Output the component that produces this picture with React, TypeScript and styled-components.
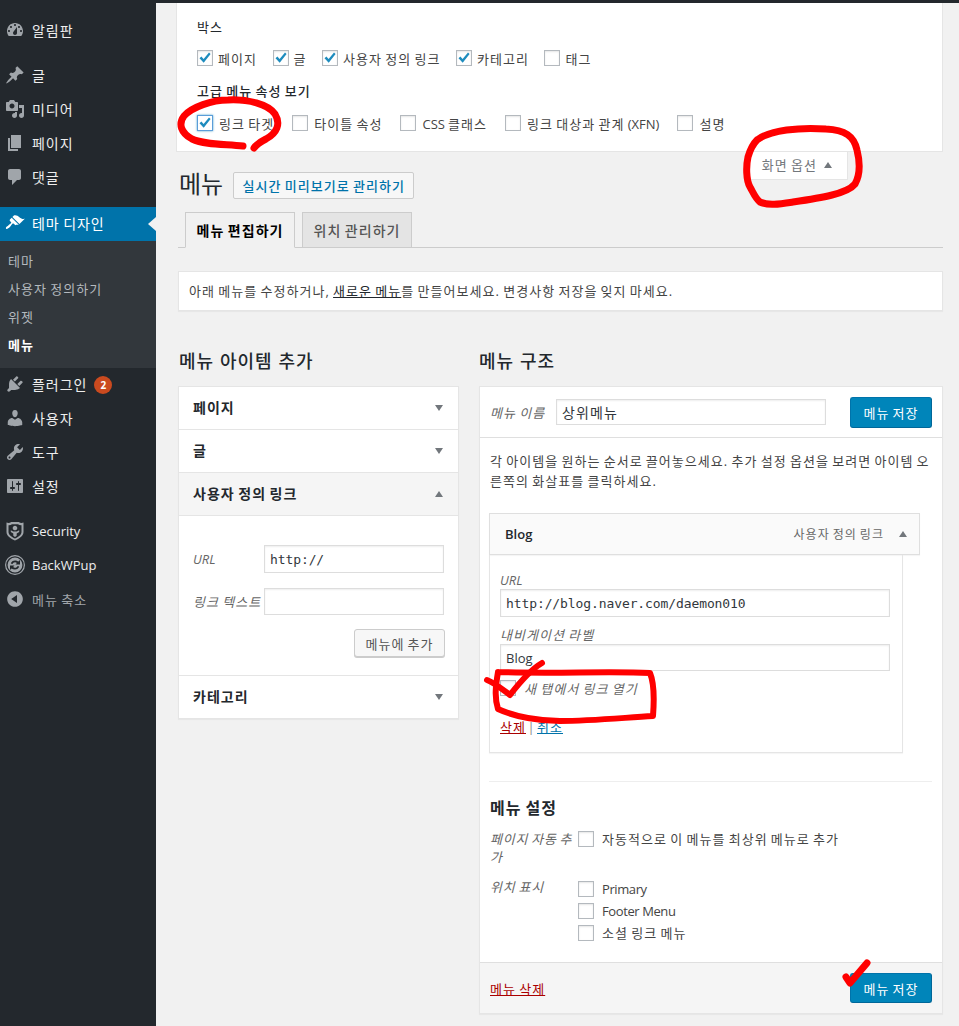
import React from "react";
import styled, { createGlobalStyle } from "styled-components";

const GlobalStyle = createGlobalStyle`
  html, body {
    margin: 0;
    padding: 0;
    background: #f1f1f1;
  }
  body {
    font-family: "Open Sans", "Noto Sans CJK KR", sans-serif;
    font-size: 13px;
    color: #444;
    letter-spacing: 0.08em;
    word-spacing: -1.2px;
  }
  * { box-sizing: border-box; }
`;

const Page = styled.div`
  position: relative;
  display: flex;
  width: 959px;
  height: 1026px;
  overflow: hidden;
`;

const Sidebar = styled.nav`
  width: 156px;
  flex: none;
  background: #23282d;
  padding-top: 14px;
`;

const MenuItem = styled.div<{ $active?: boolean; $muted?: boolean; $gap?: number }>`
  position: relative;
  display: flex;
  align-items: center;
  gap: 7px;
  height: 34px;
  padding: 0 0 2px 5px;
  margin-top: ${(p) => p.$gap ?? 0}px;
  background: ${(p) => (p.$active ? "#0073aa" : "transparent")};
  color: ${(p) => (p.$active ? "#fff" : p.$muted ? "#a0a5aa" : "#eee")};
  fill: ${(p) => (p.$active ? "#fff" : "#a0a5aa")};
  font-size: ${(p) => (p.$muted ? "13px" : "14px")};
  letter-spacing: ${(p) => (p.$muted ? "0.08em" : "0.07em")};
  ${(p) =>
    p.$active &&
    `&::after {
      content: "";
      position: absolute;
      right: 0;
      top: 10px;
      border: 7px solid transparent;
      border-right-color: #f1f1f1;
      border-left-width: 0;
      border-right-width: 8px;
    }`}
`;

const MenuIcon = styled.svg`
  width: 20px;
  height: 20px;
  flex: none;
`;

const SubMenu = styled.div`
  background: #32373c;
  padding: 6px 0 9px;
`;

const SubItem = styled.div<{ $current?: boolean }>`
  height: 28px;
  line-height: 28px;
  padding-left: 8px;
  color: ${(p) => (p.$current ? "#fff" : "#b4b9be")};
  font-weight: ${(p) => (p.$current ? 700 : 400)};
`;

const Badge = styled.span`
  display: inline-flex;
  align-items: center;
  justify-content: center;
  width: 18px;
  height: 18px;
  margin: 2px 0 0 0;
  border-radius: 50%;
  background: #ca4a1f;
  color: #fff;
  font-size: 10px;
  font-weight: 700;
  letter-spacing: 0;
`;

const Main = styled.main`
  flex: 1;
  min-width: 0;
  border-top: 3px solid #23282d;
  padding: 0 16px 0 20px;
`;

const ScreenPanel = styled.section`
  height: 149px;
  background: #fff;
  border: 1px solid #e5e5e5;
  border-top: 0;
  padding: 13px 20px 0;
`;

const PanelTitle = styled.div<{ $top?: number; $strong?: boolean }>`
  line-height: 22px;
  color: #23282d;
  margin-top: ${(p) => p.$top ?? 0}px;
  font-weight: ${(p) => (p.$strong ? 500 : 400)};
`;

const CheckRow = styled.div<{ $top: number; $gap: number }>`
  display: flex;
  align-items: center;
  gap: ${(p) => p.$gap}px;
  margin-top: ${(p) => p.$top}px;
  height: 20px;
`;

const CheckLabel = styled.label<{ $gap?: number }>`
  display: inline-flex;
  align-items: center;
  gap: ${(p) => p.$gap ?? 5}px;
  color: #444;
  white-space: nowrap;
`;

const Box = styled.span<{ $focus?: boolean }>`
  display: inline-flex;
  align-items: center;
  justify-content: center;
  width: 16px;
  height: 16px;
  flex: none;
  background: #fff;
  border: 1px solid ${(p) => (p.$focus ? "#5b9dd9" : "#b4b9be")};
  box-shadow: ${(p) =>
    p.$focus ? "0 0 2px rgba(30,140,190,.8)" : "inset 0 1px 2px rgba(0,0,0,.1)"};
`;

const Latin = styled.span<{ $tight?: boolean }>`
  letter-spacing: ${(p) => (p.$tight ? "-0.4px" : "0")};
  word-spacing: 0;
  font-size: 13px;
`;

const ScreenTabRow = styled.div`
  display: flex;
  justify-content: flex-end;
  height: 28px;
  margin-bottom: -8px;
  padding-right: 95px;
`;

const ScreenTab = styled.div`
  display: flex;
  align-items: center;
  gap: 7px;
  height: 28px;
  padding: 0 15px 2px 14px;
  background: #fff;
  border: 1px solid #e5e5e5;
  border-top: 0;
  color: #72777c;
`;

const Arrow = styled.span<{ $up?: boolean; $top?: number }>`
  display: inline-block;
  flex: none;
  margin-top: ${(p) => p.$top ?? 0}px;
  border-left: 4.5px solid transparent;
  border-right: 4.5px solid transparent;
  ${(p) =>
    p.$up ? "border-bottom: 6px solid #72777c;" : "border-top: 6px solid #72777c;"}
`;

const TitleRow = styled.div`
  position: relative;
  display: flex;
  align-items: center;
  gap: 10px;
  height: 27px;
  padding-left: 3px;
`;

const PageTitle = styled.h1`
  margin: 0 0 4px;
  font-size: 24px;
  line-height: 30px;
  font-weight: 400;
  letter-spacing: 0;
  color: #23282d;
`;

const OutlineLink = styled.a`
  display: flex;
  align-items: center;
  justify-content: center;
  width: 181px;
  height: 27px;
  background: #f7f7f7;
  border: 1px solid #ccc;
  border-radius: 2px;
  color: #0073aa;
  font-weight: 500;
`;

const TabBar = styled.div`
  display: flex;
  gap: 7px;
  height: 36px;
  margin: 13px 0 0 2px;
  padding-left: 7px;
  border-bottom: 1px solid #ccc;
`;

const Tab = styled.div<{ $active?: boolean }>`
  display: flex;
  align-items: center;
  justify-content: center;
  width: 110px;
  height: 36px;
  border: 1px solid #ccc;
  border-bottom-color: ${(p) => (p.$active ? "#f1f1f1" : "#ccc")};
  background: ${(p) => (p.$active ? "#f1f1f1" : "#e4e4e4")};
  color: ${(p) => (p.$active ? "#000" : "#555")};
  font-size: 14px;
  font-weight: ${(p) => (p.$active ? 700 : 500)};
`;

const Notice = styled.div`
  display: flex;
  align-items: center;
  height: 40px;
  margin: 23px 0 0 2px;
  padding: 0 0 2px 10px;
  background: #fff;
  border: 1px solid #e5e5e5;
  box-shadow: 0 1px 1px rgba(0, 0, 0, 0.04);
  color: #444;
  white-space: nowrap;
`;

const NoticeLink = styled.a`
  color: #23282d;
  text-decoration: underline;
`;

const Columns = styled.div`
  display: flex;
  gap: 20px;
  margin: 38px 0 0 2px;
`;

const LeftColumn = styled.div`
  width: 281px;
  flex: none;
`;

const RightColumn = styled.div`
  width: 464px;
  flex: none;
`;

const ColumnTitle = styled.h2<{ $inset?: number }>`
  margin: 0 0 12px ${(p) => p.$inset ?? 0}px;
  height: 25px;
  line-height: 25px;
  font-size: 18px;
  font-weight: 500;
  word-spacing: 0;
  color: #23282d;
`;

const Accordion = styled.div`
  background: #fff;
  border: 1px solid #e5e5e5;
  box-shadow: 0 1px 1px rgba(0, 0, 0, 0.04);
`;

const AccordionRow = styled.div<{ $open?: boolean; $last?: boolean }>`
  display: flex;
  align-items: center;
  justify-content: space-between;
  height: ${(p) => (p.$last ? 42 : 43)}px;
  padding: 0 15px 3px 14px;
  background: ${(p) => (p.$open ? "#f5f5f5" : "#fff")};
  border-bottom: ${(p) => (p.$last ? "0" : "1px solid #e5e5e5")};
  font-size: 14px;
  font-weight: 700;
  color: #23282d;
`;

const AccordionBody = styled.div`
  height: 160px;
  padding: 29px 14px 0;
  border-bottom: 1px solid #e5e5e5;
`;

const FieldRow = styled.div<{ $top?: number }>`
  display: flex;
  align-items: center;
  margin-top: ${(p) => p.$top ?? 0}px;
`;

const FieldLabel = styled.span<{ $width: number }>`
  width: ${(p) => p.$width}px;
  flex: none;
  font-style: italic;
  color: #666;
  white-space: nowrap;
`;

const TextField = styled.div<{ $width: number; $height?: number; $mono?: boolean; $large?: boolean }>`
  display: flex;
  align-items: center;
  width: ${(p) => p.$width}px;
  height: ${(p) => p.$height ?? 28}px;
  padding-left: 5px;
  background: #fff;
  border: 1px solid #ddd;
  box-shadow: inset 0 1px 2px rgba(0, 0, 0, 0.07);
  color: #32373c;
  font-family: ${(p) =>
    p.$mono ? '"DejaVu Sans Mono", "Liberation Mono", monospace' : "inherit"};
  font-size: ${(p) => (p.$large ? "14px" : "13px")};
  letter-spacing: ${(p) => (p.$mono ? "-0.1px" : "0.08em")};
  white-space: nowrap;
`;

const AddRow = styled.div`
  display: flex;
  justify-content: flex-end;
  margin: 14px -1px 0 0;
`;

const GreyButton = styled.button`
  width: 91px;
  height: 28px;
  padding: 0;
  background: #f7f7f7;
  border: 1px solid #ccc;
  border-radius: 3px;
  box-shadow: 0 1px 0 #ccc;
  color: #555;
  font: inherit;
  letter-spacing: inherit;
  word-spacing: inherit;
`;

const PrimaryButton = styled.button<{ $height: number }>`
  width: 82px;
  height: ${(p) => p.$height}px;
  padding: 0;
  background: #0085ba;
  border: 1px solid #006799;
  border-top-color: #0073aa;
  border-left-color: #0073aa;
  border-radius: 3px;
  color: #fff;
  font: inherit;
  letter-spacing: inherit;
  word-spacing: inherit;
`;

const MenuCard = styled.div`
  height: 628px;
  display: flex;
  flex-direction: column;
  background: #fff;
  border: 1px solid #e5e5e5;
  box-shadow: 0 1px 1px rgba(0, 0, 0, 0.04);
`;

const CardHeader = styled.div`
  display: flex;
  align-items: center;
  justify-content: space-between;
  height: 51px;
  padding: 0 10px;
  border-bottom: 1px solid #dfdfdf;
`;

const NameGroup = styled.div`
  display: flex;
  align-items: center;
`;

const CardBody = styled.div`
  flex: 1;
  padding: 13px 10px 0;
`;

const Intro = styled.p`
  margin: 0 0 22px;
  line-height: 20px;
  color: #444;
  white-space: nowrap;
`;

const ItemHandle = styled.div`
  display: flex;
  align-items: center;
  justify-content: space-between;
  width: 431px;
  height: 42px;
  margin-left: -1px;
  padding: 0 12px 0 15px;
  background: #fafafa;
  border: 1px solid #dfdfdf;
  box-shadow: 0 1px 1px rgba(0, 0, 0, 0.04);
`;

const ItemName = styled.span`
  font-weight: 600;
  color: #23282d;
  letter-spacing: 0;
`;

const ItemType = styled.span`
  display: flex;
  align-items: center;
  gap: 15px;
  font-size: 12px;
  color: #666;
`;

const ItemSettings = styled.div`
  width: 414px;
  height: 198px;
  margin-left: -1px;
  padding: 16px 10px 0;
  border: 1px solid #e5e5e5;
  border-top: 0;
  box-shadow: 0 1px 1px rgba(0, 0, 0, 0.04);
`;

const StackLabel = styled.div<{ $top?: number }>`
  line-height: 18px;
  margin-top: ${(p) => p.$top ?? 0}px;
  font-style: italic;
  color: #666;
`;

const NewTabRow = styled.div`
  display: flex;
  align-items: center;
  gap: 8px;
  margin-top: 8px;
  height: 18px;
  font-style: italic;
  color: #666;
`;

const ItemLinks = styled.div`
  margin-top: 20px;
  color: #888;
  word-spacing: -3px;
`;

const DangerLink = styled.a`
  color: #a00;
  text-decoration: underline;
`;

const BlueLink = styled.a`
  color: #0073aa;
  text-decoration: underline;
`;

const Divider = styled.hr`
  width: 443px;
  margin: 28px 0 0 -1px;
  border: 0;
  border-top: 1px solid #eee;
`;

const SettingsTitle = styled.h3`
  margin: 14px 0 0;
  height: 24px;
  line-height: 24px;
  font-size: 16px;
  font-weight: 700;
  color: #23282d;
`;

const SettingsGrid = styled.div`
  display: grid;
  grid-template-columns: 88px 1fr;
  row-gap: 12px;
  margin-top: 10px;
  line-height: 18px;
`;

const SettingsLabel = styled.div`
  font-style: italic;
  color: #666;
  letter-spacing: 0.06em;
  line-height: 18px;
`;

const SettingsOptions = styled.div<{ $top: number }>`
  display: flex;
  flex-direction: column;
  gap: 4px;
  margin-top: ${(p) => p.$top}px;
`;

const CardFooter = styled.div`
  display: flex;
  align-items: center;
  justify-content: space-between;
  height: 51px;
  padding: 0 10px;
  background: #f5f5f5;
  border-top: 1px solid #dfdfdf;
`;

const Annotations = styled.svg`
  position: absolute;
  left: 0;
  top: 0;
  width: 959px;
  height: 1026px;
  pointer-events: none;
  fill: none;
  stroke: #f00;
  stroke-linecap: round;
  stroke-linejoin: round;
`;

const Check = () => (
  <svg width="14" height="14" viewBox="0 0 14 14" aria-hidden="true">
    <path d="M1.5 7.2 L3.4 5.6 L5.6 8 L11 1.6 L12.6 3 L5.7 11.8 Z" fill="#1e8cbe" />
  </svg>
);

type OptionProps = { label: React.ReactNode; checked?: boolean; focus?: boolean; gap?: number };

const Option = ({ label, checked, focus, gap }: OptionProps) => (
  <CheckLabel $gap={gap}>
    <Box $focus={focus}>{checked && <Check />}</Box>
    {label}
  </CheckLabel>
);

const icons: Record<string, string> = {
  dashboard:
    "M3.76 16h12.48c1.1-1.37 1.76-3.11 1.76-5 0-4.42-3.58-8-8-8s-8 3.58-8 8c0 1.89.66 3.63 1.76 5zM10 4c.55 0 1 .45 1 1s-.45 1-1 1-1-.45-1-1 .45-1 1-1zM6 6c.55 0 1 .45 1 1s-.45 1-1 1-1-.45-1-1 .45-1 1-1zm8 0c.55 0 1 .45 1 1s-.45 1-1 1-1-.45-1-1 .45-1 1-1zm-5.37 5.55L12 7v6c0 1.1-.9 2-2 2s-2-.9-2-2c0-.57.24-1.08.63-1.45zM4 10c.55 0 1 .45 1 1s-.45 1-1 1-1-.45-1-1 .45-1 1-1zm12 0c.55 0 1 .45 1 1s-.45 1-1 1-1-.45-1-1 .45-1 1-1z",
  pin: "M10.44 3.02l1.82-1.82 6.36 6.35-1.83 1.82c-1.05-.68-2.48-.57-3.41.36l-.75.75c-.92.93-1.04 2.35-.35 3.41l-1.83 1.82-2.41-2.41-2.8 2.79c-.42.42-3.38 2.71-3.8 2.29s1.86-3.39 2.28-3.81l2.79-2.79L4.1 9.36l1.83-1.82c1.05.69 2.48.57 3.4-.36l.75-.75c.93-.92 1.05-2.35.36-3.41z",
  media:
    "M13 11V4c0-.55-.45-1-1-1h-1.67L9 1H5L3.67 3H2c-.55 0-1 .45-1 1v7c0 .55.45 1 1 1h10c.55 0 1-.45 1-1zM7 4.5c1.38 0 2.5 1.12 2.5 2.5S8.38 9.5 7 9.5 4.5 8.38 4.5 7 5.62 4.5 7 4.5zM14 6h5v10.5c0 1.38-1.12 2.5-2.5 2.5S14 17.88 14 16.5s1.12-2.5 2.5-2.5c.17 0 .34.02.5.05V9h-3V6zm-4 8.05V13h2v3.5c0 1.38-1.12 2.5-2.5 2.5S7 17.88 7 16.5 8.12 14 9.5 14c.17 0 .34.02.5.05z",
  page: "M6 15V2h10v13H6zm-1 1h8v2H3V5h2v11z",
  comments:
    "M5 2h9c1.1 0 2 .9 2 2v7c0 1.1-.9 2-2 2h-2l-5 5v-5H5c-1.1 0-2-.9-2-2V4c0-1.1.9-2 2-2z",
  appearance:
    "M14.48 11.06L7.41 3.99l1.5-1.5c.5-.56 2.3-.47 3.51.32 1.21.8 1.43 1.28 2.91 2.1 1.18.64 2.45 1.26 4.45.85zm-.71.71L6.7 4.7 4.93 6.47c-.39.39-.39 1.02 0 1.41l1.06 1.06c.39.39.39 1.03 0 1.42-.6.6-1.43 1.11-2.21 1.69-.35.26-.7.53-1.01.84C1.43 13.23.4 14.98 1.1 15.68c.7.7 2.45-.33 3.77-1.67.31-.31.58-.66.84-1.01.58-.78 1.09-1.61 1.69-2.21.39-.39 1.02-.39 1.41 0l1.06 1.06c.39.39 1.03.39 1.42 0z",
  plugins:
    "M13.11 4.36L9.87 7.6 8 5.73l3.24-3.24c.35-.34 1.05-.2 1.56.32.52.51.66 1.21.31 1.55zm-8 1.77l.91-1.12 9.01 9.01-1.19.84c-.71.71-2.63 1.16-3.82 1.16H6.14L4.9 17.26c-.59.59-1.54.59-2.12 0-.59-.58-.59-1.53 0-2.12l1.24-1.24v-3.88c0-1.13.4-3.19 1.09-3.89zm7.26 3.97l3.24-3.24c.34-.35 1.04-.21 1.55.31.52.51.66 1.21.31 1.55l-3.24 3.25z",
  users:
    "M10 9.25c-2.27 0-2.73-3.44-2.73-3.44C7 4.02 7.82 2 9.97 2c2.16 0 2.98 2.02 2.71 3.81 0 0-.41 3.44-2.68 3.44zm0 2.57L12.72 10c2.39 0 4.52 2.33 4.52 4.53v2.49s-3.65 1.13-7.24 1.13c-3.65 0-7.24-1.13-7.24-1.13v-2.49c0-2.25 1.94-4.48 4.47-4.48z",
  tools:
    "M16.68 9.77c-1.34 1.34-3.3 1.67-4.95.99l-5.41 6.52c-.99.99-2.59.99-3.58 0s-.99-2.59 0-3.57l6.52-5.42c-.68-1.65-.35-3.61.99-4.95 1.28-1.28 3.12-1.62 4.72-1.06l-2.89 2.89 2.82 2.82 2.86-2.87c.53 1.58.18 3.39-1.08 4.67zM3.81 16.21c.4.39 1.04.39 1.43 0 .4-.4.4-1.04 0-1.43-.39-.4-1.03-.4-1.43 0-.39.39-.39 1.03 0 1.43z",
  settings:
    "M18 16V4c0-.55-.45-1-1-1H3c-.55 0-1 .45-1 1v12c0 .55.45 1 1 1h14c.55 0 1-.45 1-1zM8 11h1c.55 0 1 .45 1 1s-.45 1-1 1H8v1.5c0 .28-.22.5-.5.5s-.5-.22-.5-.5V13H6c-.55 0-1-.45-1-1s.45-1 1-1h1V5.5c0-.28.22-.5.5-.5s.5.22.5.5V11zm5-2h-1c-.55 0-1-.45-1-1s.45-1 1-1h1V5.5c0-.28.22-.5.5-.5s.5.22.5.5V7h1c.55 0 1 .45 1 1s-.45 1-1 1h-1v5.5c0 .28-.22.5-.5.5s-.5-.22-.5-.5V9z",
  collapse:
    "M10 2.16c4.33 0 7.84 3.51 7.84 7.84s-3.51 7.84-7.84 7.84S2.16 14.33 2.16 10 5.71 2.16 10 2.16zm2 11.72V6.12L6.18 9.97z",
  shield:
    "M1.500 1.500c1.600.7 3.300.6 4.700-.5h7.600c1.400 1.100 3.100 1.200 4.700.5V11c0 3.800-4.200 6.900-8.500 8.500C5.700 17.900 1.500 14.800 1.500 11zM3.500 4.200V11c0 2.700 3.200 5.200 6.500 6.400 3.300-1.200 6.500-3.700 6.500-6.400V4.200c-1.300.1-2.500-.2-3.500-1H7c-1 .8-2.200 1.100-3.500 1zM10 4.800c1.300 0 2.300 1 2.300 2.300S11.300 9.400 10 9.400 7.700 8.400 7.700 7.100 8.700 4.800 10 4.800zM5.800 9.300l2.400 1.300h3.600l2.400-1.300v1.800l-2.500 1.400v2.200L10 16l-1.700-1.300v-2.200l-2.500-1.400z",
  backup:
    "M10 0a10 10 0 1 1 0 20 10 10 0 0 1 0-20zM10 1.200a8.800 8.800 0 1 0 0 17.600 8.800 8.800 0 0 0 0-17.600zM10 2.600a7.400 7.400 0 1 1 0 14.800 7.400 7.400 0 0 1 0-14.800zM10 5.500c-2 0-3.600 1.300-4.200 3.100l1.600.5c.4-1.100 1.400-1.900 2.600-1.900.7 0 1.400.3 1.900.8L10.500 9.500H15V5l-1.600 1.600C12.500 6 11.300 5.500 10 5.500zM5 10.500V15l1.600-1.600c.9.700 2.100 1.100 3.400 1.100 2 0 3.600-1.300 4.200-3.100l-1.600-.5c-.4 1.100-1.400 1.900-2.600 1.900-.7 0-1.400-.3-1.900-.8l1.400-1.500z",
};

const Icon = ({ name }: { name: string }) => (
  <MenuIcon viewBox="0 0 20 20" aria-hidden="true">
    <path fillRule="evenodd" d={icons[name]} />
  </MenuIcon>
);

export default function App() {
  return (
    <Page>
      <GlobalStyle />
      <Sidebar>
        <MenuItem>
          <Icon name="dashboard" />
          알림판
        </MenuItem>
        <MenuItem $gap={11}>
          <Icon name="pin" />글
        </MenuItem>
        <MenuItem>
          <Icon name="media" />
          미디어
        </MenuItem>
        <MenuItem>
          <Icon name="page" />
          페이지
        </MenuItem>
        <MenuItem>
          <Icon name="comments" />
          댓글
        </MenuItem>
        <MenuItem $active $gap={12}>
          <Icon name="appearance" />
          테마 디자인
        </MenuItem>
        <SubMenu>
          <SubItem>테마</SubItem>
          <SubItem>사용자 정의하기</SubItem>
          <SubItem>위젯</SubItem>
          <SubItem $current>메뉴</SubItem>
        </SubMenu>
        <MenuItem>
          <Icon name="plugins" />
          플러그인
          <Badge>2</Badge>
        </MenuItem>
        <MenuItem>
          <Icon name="users" />
          사용자
        </MenuItem>
        <MenuItem>
          <Icon name="tools" />
          도구
        </MenuItem>
        <MenuItem>
          <Icon name="settings" />
          설정
        </MenuItem>
        <MenuItem $gap={11}>
          <Icon name="shield" />
          <Latin>Security</Latin>
        </MenuItem>
        <MenuItem>
          <Icon name="backup" />
          <Latin>BackWPup</Latin>
        </MenuItem>
        <MenuItem $muted>
          <Icon name="collapse" />
          메뉴 축소
        </MenuItem>
      </Sidebar>

      <Main>
        <ScreenPanel>
          <PanelTitle>박스</PanelTitle>
          <CheckRow $top={10} $gap={15.5}>
            <Option checked label="페이지" />
            <Option checked label="글" />
            <Option checked label="사용자 정의 링크" />
            <Option checked label="카테고리" />
            <Option label="태그" />
          </CheckRow>
          <PanelTitle $top={12} $strong>
            고급 메뉴 속성 보기
          </PanelTitle>
          <CheckRow $top={11} $gap={18}>
            <Option gap={6} checked focus label="링크 타겟" />
            <Option gap={6} label="타이틀 속성" />
            <Option gap={6} label={<span><Latin>CSS</Latin> 클래스</span>} />
            <Option gap={6} label={<span>링크 대상과 관계 <Latin>(XFN)</Latin></span>} />
            <Option gap={6} label="설명" />
          </CheckRow>
        </ScreenPanel>

        <ScreenTabRow>
          <ScreenTab>
            화면 옵션
            <Arrow $up />
          </ScreenTab>
        </ScreenTabRow>

        <TitleRow>
          <PageTitle>메뉴</PageTitle>
          <OutlineLink>실시간 미리보기로 관리하기</OutlineLink>
        </TitleRow>

        <TabBar>
          <Tab $active>메뉴 편집하기</Tab>
          <Tab>위치 관리하기</Tab>
        </TabBar>

        <Notice>
          <span>
            아래 메뉴를 수정하거나, <NoticeLink>새로운 메뉴</NoticeLink>를 만들어보세요. 변경사항 저장을 잊지 마세요.
          </span>
        </Notice>

        <Columns>
          <LeftColumn>
            <ColumnTitle $inset={1}>메뉴 아이템 추가</ColumnTitle>
            <Accordion>
              <AccordionRow>
                페이지
                <Arrow $top={3} />
              </AccordionRow>
              <AccordionRow>
                글
                <Arrow $top={3} />
              </AccordionRow>
              <AccordionRow $open>
                사용자 정의 링크
                <Arrow $up $top={3} />
              </AccordionRow>
              <AccordionBody>
                <FieldRow>
                  <FieldLabel $width={71}>
                    <Latin>URL</Latin>
                  </FieldLabel>
                  <TextField $width={180} $mono>
                    http://
                  </TextField>
                </FieldRow>
                <FieldRow $top={15}>
                  <FieldLabel $width={71}>링크 텍스트</FieldLabel>
                  <TextField $width={180} $height={27} />
                </FieldRow>
                <AddRow>
                  <GreyButton>메뉴에 추가</GreyButton>
                </AddRow>
              </AccordionBody>
              <AccordionRow $last>
                카테고리
                <Arrow $top={3} />
              </AccordionRow>
            </Accordion>
          </LeftColumn>

          <RightColumn>
            <ColumnTitle>메뉴 구조</ColumnTitle>
            <MenuCard>
              <CardHeader>
                <NameGroup>
                  <FieldLabel $width={66}>메뉴 이름</FieldLabel>
                  <TextField $width={270} $height={26} $large>
                    상위메뉴
                  </TextField>
                </NameGroup>
                <PrimaryButton $height={31}>메뉴 저장</PrimaryButton>
              </CardHeader>

              <CardBody>
                <Intro>
                  각 아이템을 원하는 순서로 끌어놓으세요. 추가 설정 옵션을 보려면 아이템 오
                  <br />
                  른쪽의 화살표를 클릭하세요.
                </Intro>

                <ItemHandle>
                  <ItemName>Blog</ItemName>
                  <ItemType>
                    사용자 정의 링크
                    <Arrow $up />
                  </ItemType>
                </ItemHandle>
                <ItemSettings>
                  <StackLabel>
                    <Latin>URL</Latin>
                  </StackLabel>
                  <TextField $width={390} $mono>
                    http://blog.naver.com/daemon010
                  </TextField>
                  <StackLabel $top={9}>내비게이션 라벨</StackLabel>
                  <TextField $width={390} $height={27}>
                    <Latin>Blog</Latin>
                  </TextField>
                  <NewTabRow>
                    <Box />새 탭에서 링크 열기
                  </NewTabRow>
                  <ItemLinks>
                    <DangerLink>삭제</DangerLink> | <BlueLink>취소</BlueLink>
                  </ItemLinks>
                </ItemSettings>

                <Divider />
                <SettingsTitle>메뉴 설정</SettingsTitle>
                <SettingsGrid>
                  <SettingsLabel>페이지 자동 추가</SettingsLabel>
                  <SettingsOptions $top={0}>
                    <Option gap={8} label="자동적으로 이 메뉴를 최상위 메뉴로 추가" />
                  </SettingsOptions>
                  <SettingsLabel>위치 표시</SettingsLabel>
                  <SettingsOptions $top={2}>
                    <Option gap={8} label={<Latin $tight>Primary</Latin>} />
                    <Option gap={8} label={<Latin $tight>Footer Menu</Latin>} />
                    <Option gap={8} label="소셜 링크 메뉴" />
                  </SettingsOptions>
                </SettingsGrid>
              </CardBody>

              <CardFooter>
                <DangerLink>메뉴 삭제</DangerLink>
                <PrimaryButton $height={30}>메뉴 저장</PrimaryButton>
              </CardFooter>
            </MenuCard>
          </RightColumn>
        </Columns>
      </Main>

      <Annotations viewBox="0 0 959 1026" aria-hidden="true">
        <path
          strokeWidth="7"
          d="M243 146 C225 144 205 145 192 139 C181 133 178 124 184 116 C192 107 212 100 228 100 C248 99 268 104 275 114 C281 124 277 133 266 139 C260 142 256 145 254 148"
        />
        <path
          strokeWidth="7"
          d="M757 140 C770 130 800 127 826 129 C845 130 854 136 857 150 C860 162 860 175 855 184 C847 194 820 198 793 202 C780 204 768 206 760 202 C755 198 753 192 750 187 C746 180 746 166 748 157 C750 150 753 144 757 140"
        />
        <path strokeWidth="6" d="M487 680 C495 683 503 690 510 695 C520 682 530 670 542 663" />
        <path
          strokeWidth="6"
          d="M498 672 C550 674 610 671 650 673 C655 685 654 703 653 716 C620 718 590 721 560 721 C540 721 515 717 498 709 C494 697 496 684 498 672"
        />
        <path strokeWidth="7" d="M846 977 L850 983 L867 963" />
      </Annotations>
    </Page>
  );
}
